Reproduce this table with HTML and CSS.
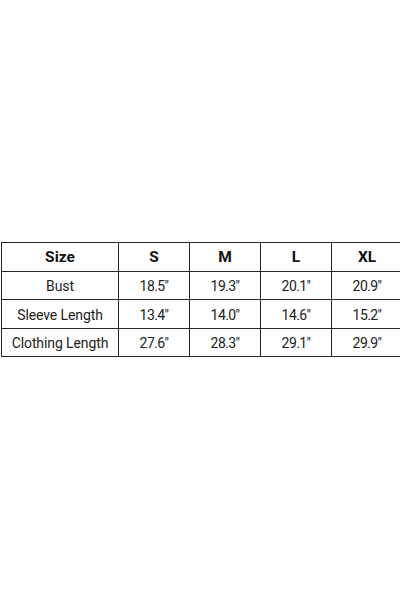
FILE: index.html
```html
<!DOCTYPE html>
<html>
<head>
<meta charset="utf-8">
<link rel="stylesheet" href="styles.css">
</head>
<body>
<div class="page">
  <table class="size-table">
    <tr class="head">
      <th>Size</th><th>S</th><th>M</th><th>L</th><th>XL</th>
    </tr>
    <tr>
      <td class="label">Bust</td><td class="num">18.5"</td><td class="num">19.3"</td><td class="num">20.1"</td><td class="num">20.9"</td>
    </tr>
    <tr>
      <td class="label">Sleeve Length</td><td class="num">13.4"</td><td class="num">14.0"</td><td class="num">14.6"</td><td class="num">15.2"</td>
    </tr>
    <tr>
      <td class="label">Clothing Length</td><td class="num">27.6"</td><td class="num">28.3"</td><td class="num">29.1"</td><td class="num">29.9"</td>
    </tr>
  </table>
</div>
</body>
</html>
```
FILE: styles.css
```css
html, body {
  margin: 0;
  padding: 0;
  background: #fff;
}
.page {
  width: 400px;
  height: 600px;
  padding-top: 242px;
  padding-left: 1px;
  box-sizing: border-box;
}
.size-table {
  border-collapse: collapse;
  font-family: Roboto, "Liberation Sans", sans-serif;
  font-size: 14px;
  line-height: 16px;
  color: #222;
  table-layout: fixed;
  width: 397px;
}
.size-table th,
.size-table td {
  border: 1.5px solid #262626;
  height: 25.5px;
  padding: 2px 0 0;
  text-align: center;
  vertical-align: middle;
}
.size-table th {
  font-weight: 700;
  font-size: 15.5px;
  color: #111;
  height: 26.5px;
  padding-top: 1px;
}
.size-table .label {
  letter-spacing: -0.1px;
}
.size-table .num {
  letter-spacing: -0.6px;
}
.size-table th:first-child { width: 116px; }
.size-table th:not(:first-child) { width: 70px; }
```
